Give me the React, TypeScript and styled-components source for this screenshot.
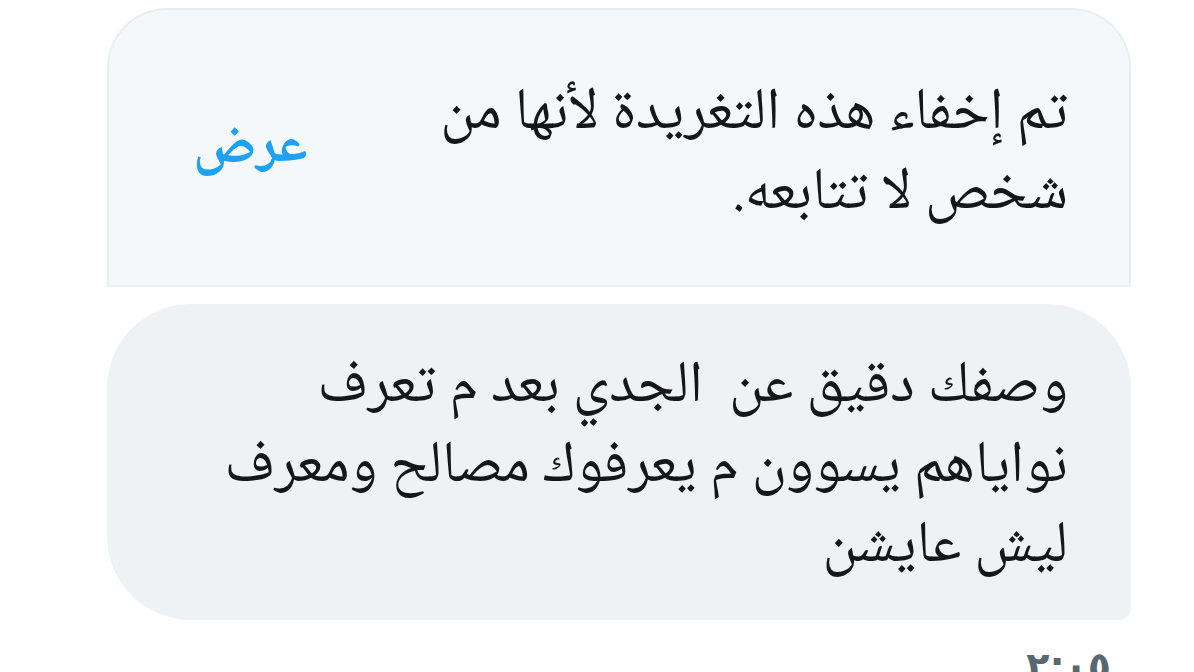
import React from "react";
import styled, { createGlobalStyle } from "styled-components";

const Global = createGlobalStyle`
  html, body { margin: 0; padding: 0; background: #ffffff; }
  body { font-family: "Noto Naskh Arabic", "Noto Sans Arabic", "DejaVu Sans", sans-serif; }
`;

const Page = styled.div`
  direction: rtl;
  width: 1194px;
  height: 672px;
  overflow: hidden;
  box-sizing: border-box;
  padding: 8px 63px 0 107px;
  display: flex;
  flex-direction: column;
`;

const Column = styled.div`
  width: 1024px;
  display: flex;
  flex-direction: column;
`;

const HiddenCard = styled.div`
  box-sizing: border-box;
  height: 279px;
  background: #f5f8fa;
  border: 2px solid #e9eef1;
  border-bottom: 2px solid #edf1f4;
  border-radius: 60px 60px 0 0;
  display: flex;
  align-items: center;
  justify-content: space-between;
  padding: 14px 61px 0 84px;
`;

const Notice = styled.p`
  margin: 0;
  font-size: 59px;
  line-height: 80px;
  color: #14171a;
  text-align: right;
`;

const ShowButton = styled.span`
  font-size: 56px;
  font-weight: 700;
  color: #1da1f2;
  margin-top: -10px;
`;

const Bubble = styled.div`
  margin-top: 17px;
  box-sizing: border-box;
  height: 316px;
  background: #eef2f4;
  border-radius: 84px 84px 12px 84px;
  padding: 44px 63px 0 40px;
`;

const Message = styled.p`
  margin: 0;
  font-size: 59px;
  line-height: 80px;
  color: #14171a;
  text-align: right;
`;

const Time = styled.div`
  margin-top: 26px;
  padding-right: 20px;
  font-size: 38px;
  line-height: 40px;
  font-weight: 700;
  color: #586872;
  font-family: "DejaVu Sans", sans-serif;
`;

export default function App() {
  return (
    <>
      <Global />
      <Page>
        <Column>
          <HiddenCard>
            <Notice>
              تم إخفاء هذه التغريدة لأنها من
              <br />
              شخص لا تتابعه.
            </Notice>
            <ShowButton>عرض</ShowButton>
          </HiddenCard>
          <Bubble>
            <Message>
              وصفك دقيق عن&nbsp; الجدي بعد م تعرف
              <br />
              نواياهم يسوون م يعرفوك مصالح ومعرف
              <br />
              ليش عايشن
            </Message>
          </Bubble>
          <Time>٢:٠٥</Time>
        </Column>
      </Page>
    </>
  );
}
